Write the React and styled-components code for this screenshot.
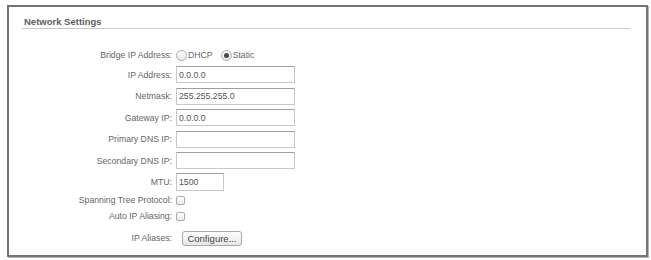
import styled, { createGlobalStyle } from "styled-components";

const GlobalStyle = createGlobalStyle`
  body {
    margin: 0;
    background: #fff;
    font-family: "Liberation Sans", Arial, sans-serif;
  }
`;

const Page = styled.div`
  width: 651px;
  height: 260px;
  padding: 5px 0 0 7px;
  box-sizing: border-box;
`;

const Frame = styled.div`
  width: 641px;
  height: 252px;
  box-sizing: border-box;
  border: 2px solid #747474;
  box-shadow: 1px 1px 0 #b5b5b5;
  background: #fff;
  padding: 9px 16px 0 13px;
`;

const Legend = styled.div`
  font-size: 9.5px;
  line-height: 12px;
  font-weight: 700;
  color: #5e5e5e;
  padding-left: 2px;
  border-bottom: 1px solid #c9c9c9;
`;

const Form = styled.div`
  display: flex;
  flex-direction: column;
  margin-top: 17px;
`;

const Row = styled.div`
  display: grid;
  grid-template-columns: 150px 1fr;
  column-gap: 4px;
  align-items: center;
  height: ${(p) => p.$h}px;
`;

const Label = styled.div`
  text-align: right;
  font-size: 8.7px;
  color: #666;
  white-space: nowrap;
`;

const Field = styled.div`
  display: flex;
  align-items: center;
`;

const TextInput = styled.div`
  width: ${(p) => p.$w}px;
  height: ${(p) => p.$hh || 17}px;
  box-sizing: border-box;
  border: 1px solid #c8c8c8;
  border-top-color: #9e9e9e;
  background: #fff;
  font-size: 8.7px;
  color: #555;
  padding-left: 2px;
  display: flex;
  align-items: center;
`;

const Radio = styled.span`
  width: 11px;
  height: 11px;
  box-sizing: border-box;
  border-radius: 50%;
  border: 1px solid #ababab;
  background: linear-gradient(#fff, #e8e8e8);
  display: inline-flex;
  align-items: center;
  justify-content: center;
  margin-right: 1px;
  &::after {
    content: "";
    width: 5px;
    height: 5px;
    border-radius: 50%;
    background: ${(p) => (p.$on ? "#4a4a4a" : "transparent")};
  }
`;

const RadioText = styled.span`
  font-size: 8.7px;
  color: #666;
  margin-right: 8px;
`;

const Check = styled.span`
  width: 9px;
  height: 9px;
  box-sizing: border-box;
  border: 1px solid #ababab;
  border-radius: 2px;
  background: linear-gradient(#fff, #ececec);
`;

const Button = styled.button`
  margin-left: 6px;
  width: 60px;
  height: 15px;
  padding: 0;
  border: 1px solid #a9a9a9;
  border-radius: 3px;
  background: linear-gradient(#ffffff, #e6e6e6);
  font-family: "Liberation Sans", Arial, sans-serif;
  font-size: 9.5px;
  color: #444;
`;

const rows = [
  { label: "IP Address:", value: "0.0.0.0" },
  { label: "Netmask:", value: "255.255.255.0" },
  { label: "Gateway IP:", value: "0.0.0.0" },
  { label: "Primary DNS IP:", value: "" },
  { label: "Secondary DNS IP:", value: "" },
];

export default function App() {
  return (
    <>
      <GlobalStyle />
      <Page>
        <Frame>
          <Legend>Network Settings</Legend>
          <Form>
            <Row $h={18}>
              <Label>Bridge IP Address:</Label>
              <Field>
                <Radio />
                <RadioText>DHCP</RadioText>
                <Radio $on />
                <RadioText>Static</RadioText>
              </Field>
            </Row>
            {rows.map((r) => (
              <Row $h={21.5} key={r.label}>
                <Label>{r.label}</Label>
                <Field>
                  <TextInput $w={119}>{r.value}</TextInput>
                </Field>
              </Row>
            ))}
            <Row $h={20.75}>
              <Label>MTU:</Label>
              <Field>
                <TextInput $w={48} $hh={18}>1500</TextInput>
              </Field>
            </Row>
            <Row $h={16}>
              <Label>Spanning Tree Protocol:</Label>
              <Field>
                <Check />
              </Field>
            </Row>
            <Row $h={16}>
              <Label>Auto IP Aliasing:</Label>
              <Field>
                <Check />
              </Field>
            </Row>
            <Row $h={28}>
              <Label>IP Aliases:</Label>
              <Field>
                <Button>Configure...</Button>
              </Field>
            </Row>
          </Form>
        </Frame>
      </Page>
    </>
  );
}
